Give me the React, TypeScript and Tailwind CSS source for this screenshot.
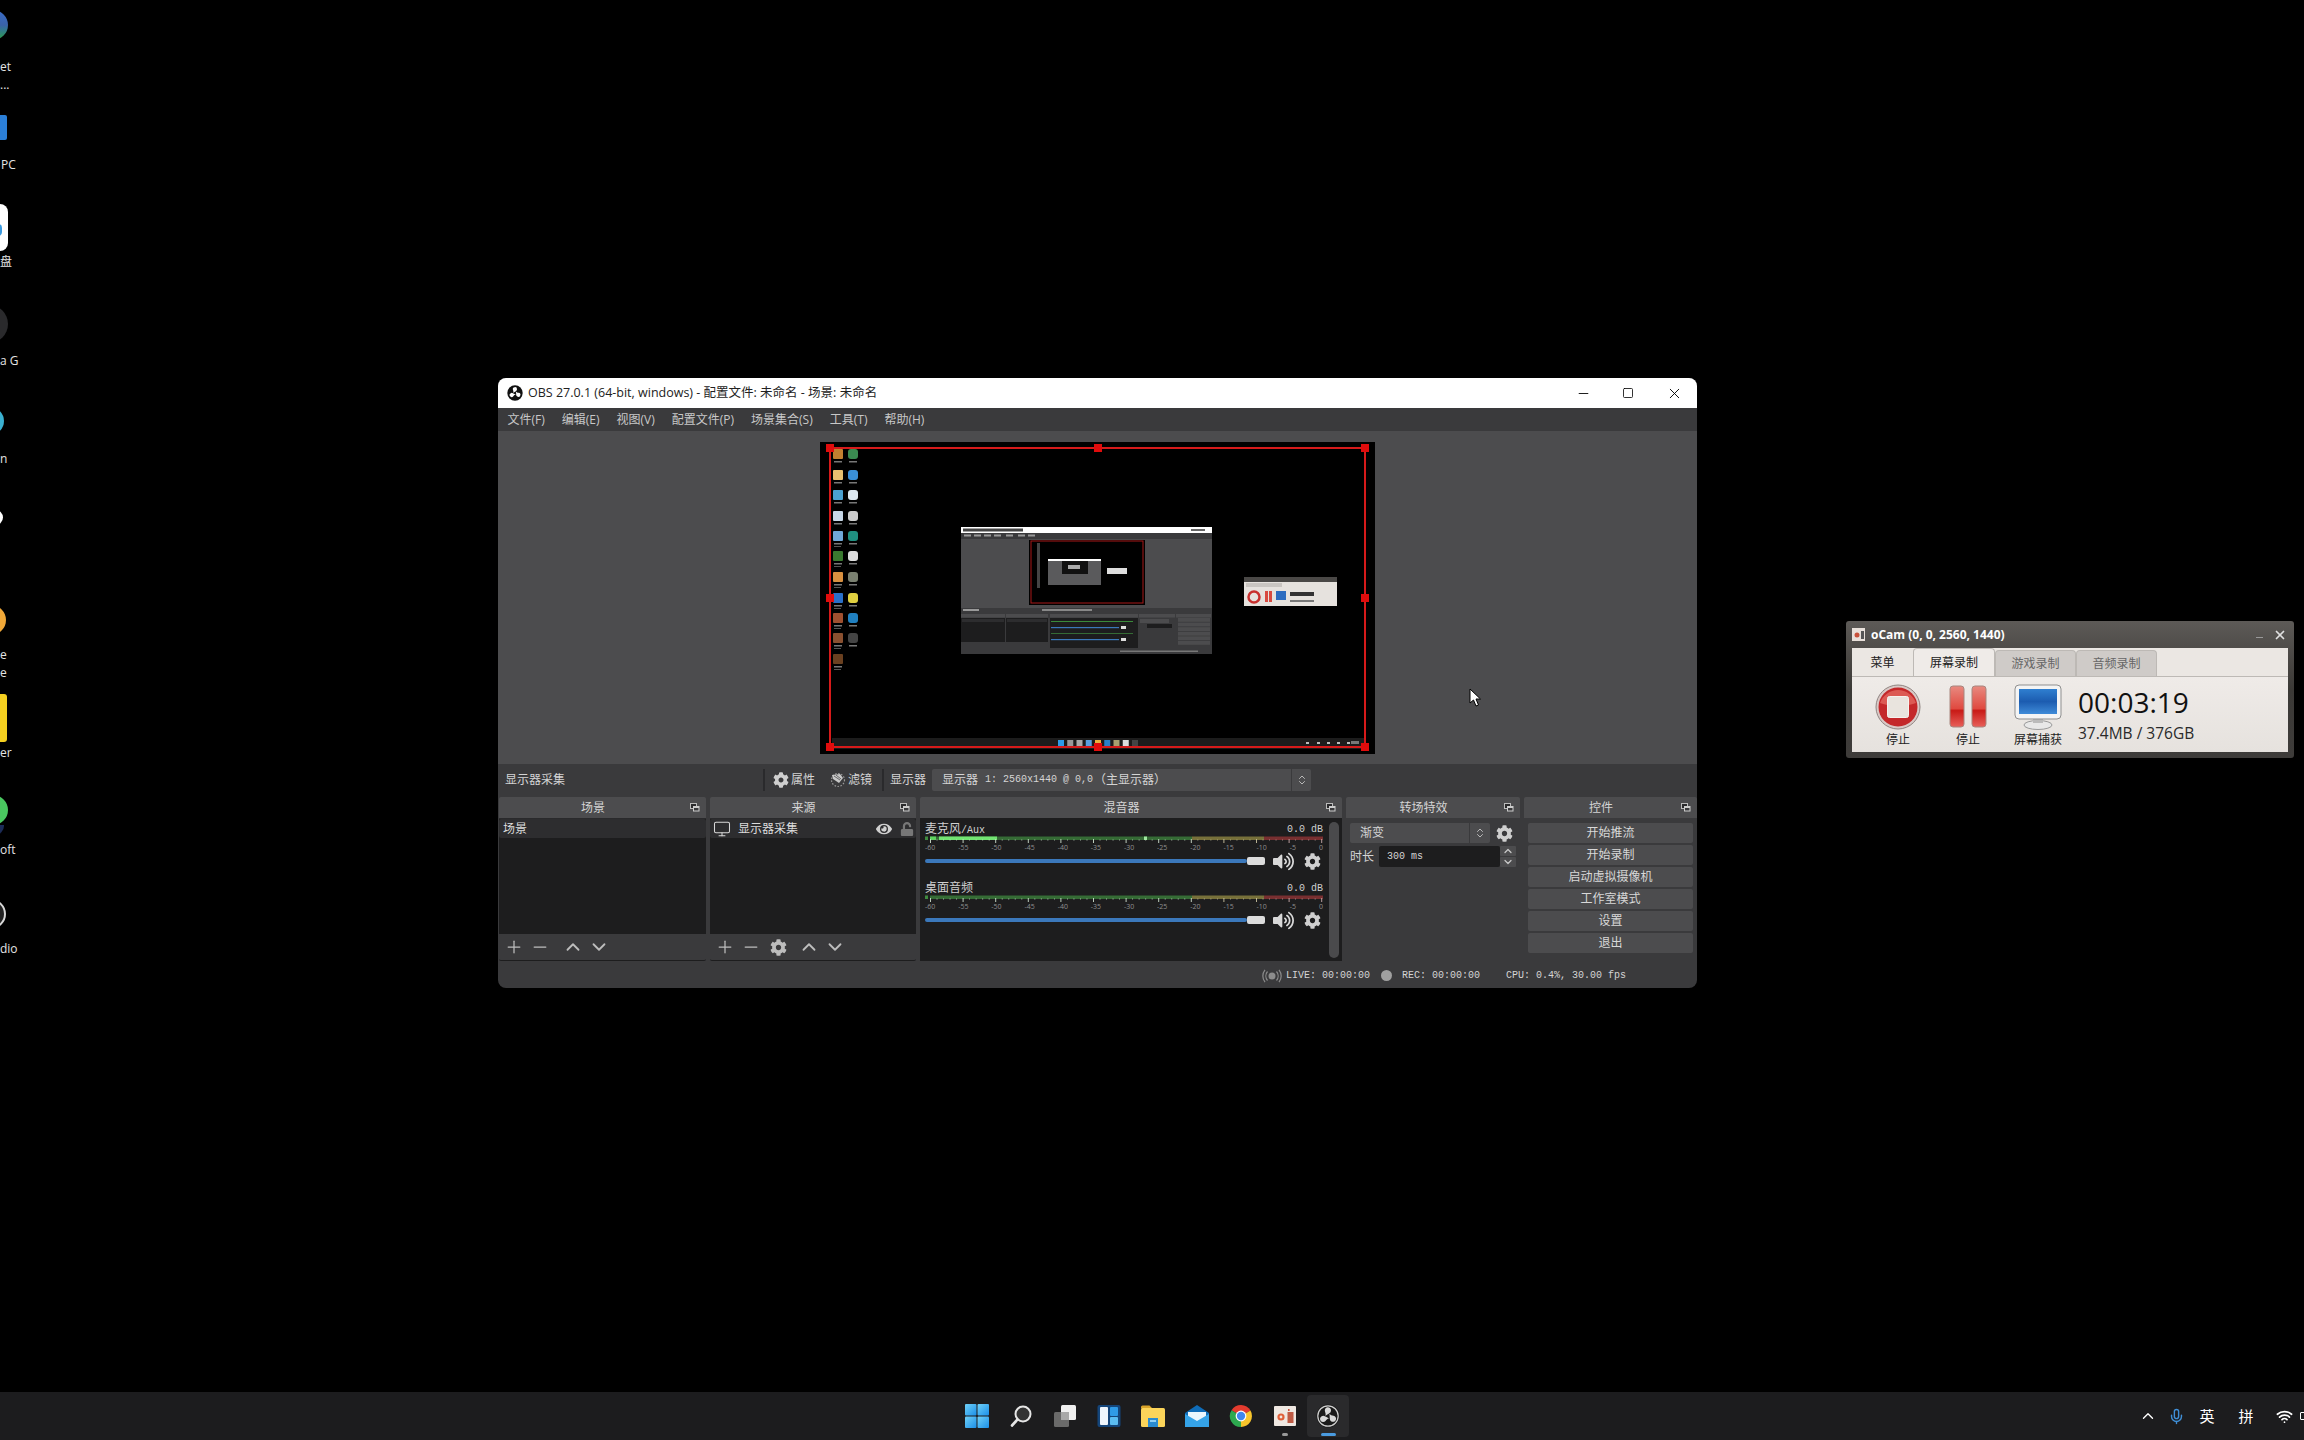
import React from "react";
import { FaCog, FaEye, FaUnlock, FaVolumeUp } from "react-icons/fa";
import { Plus, Minus, ChevronUp, ChevronDown, ChevronsUpDown, Monitor, X, Square, Mic, Wifi } from "lucide-react";

const mono = "font-['Liberation_Mono','Noto_Sans_CJK_SC',monospace]";

function ObsLogo({ size, ring = "#111", blade = "#fff" }: { size: number; ring?: string; blade?: string }) {
  const b = "M15 6.4a3.1 3.1 0 1 0-6 1c.5 1.5 1 3 .3 4.6 1.2-1.2 2.8-1.9 4-2.8A3.1 3.1 0 0 0 15 6.4z";
  return (
    <svg width={size} height={size} viewBox="0 0 24 24">
      <circle cx="12" cy="12" r="11.5" fill={ring} />
      {blade !== "#fff" && <circle cx="12" cy="12" r="10.2" fill="none" stroke="#d0d0d0" strokeWidth="1.2" />}
      <path d={b} fill={blade} />
      <path d={b} fill={blade} transform="rotate(120 12 12)" />
      <path d={b} fill={blade} transform="rotate(240 12 12)" />
    </svg>
  );
}

function DockIcon() {
  return (
    <svg width="10" height="9" viewBox="0 0 10 9">
      <rect x="0.5" y="0.5" width="6" height="5" fill="#2a2a2c" stroke="#bbb" />
      <rect x="3" y="3" width="6.5" height="5.5" fill="#ccc" />
      <rect x="4" y="5" width="4.5" height="2.5" fill="#3a3a3c" />
    </svg>
  );
}

function Dock({ title, className, children }: { title: string; className: string; children: React.ReactNode }) {
  return (
    <div className={`flex flex-col ${className}`}>
      <div className="flex h-[21px] shrink-0 items-center rounded-t-[2px] bg-[#4c4c4e] text-[12px] text-[#d4d4d4]">
        <span className="flex-1 text-center">{title}</span>
        <span className="flex w-[19px] justify-start pl-[3px]"><DockIcon /></span>
      </div>
      {children}
    </div>
  );
}

function ListDock({ title, className, row, tools }: { title: string; className: string; row: React.ReactNode; tools: React.ReactNode }) {
  return (
    <Dock title={title} className={className}>
      <div className="flex-1 border-t border-[#2a2a2c] bg-[#1d1d1e]">
        <div className="flex h-[19px] items-center rounded-[2px] bg-[#2d2d2f] text-[12px] text-[#dcdcdc]">{row}</div>
      </div>
      <div className="flex h-[27px] shrink-0 items-center rounded-b-[2px] border-b border-[#1d1d1e] bg-[#3a3a3c] text-[#bdbdbd]">{tools}</div>
    </Dock>
  );
}

function Tool({ w, children }: { w: string; children: React.ReactNode }) {
  return <span className={`flex items-center justify-center ${w}`}>{children}</span>;
}

function Meter({ active }: { active?: boolean }) {
  const ticks: React.ReactNode[] = [];
  for (let db = 0; db <= 60; db++) {
    const x = 5.5 + db * 6.52;
    const major = db % 5 === 0;
    const col = db > 51 ? "#c9a9a9" : db > 40 ? "#c9c3a0" : "#cfe0cf";
    ticks.push(<line key={db} x1={x} x2={x} y1={3} y2={major ? 7 : 5} stroke={col} strokeWidth={major ? 1 : 0.7} opacity={major ? 0.9 : 0.55} />);
  }
  return (
    <svg width="398" height="7" viewBox="0 0 398 7" className="block">
      <rect x="0" y="0.5" width="3" height="3.5" fill="#3f8a3f" />
      <rect x="5" y="0.5" width="262" height="3.5" fill="#356b35" />
      <rect x="267" y="0.5" width="72" height="3.5" fill="#77703a" />
      <rect x="339" y="0.5" width="59" height="3.5" fill="#782f30" />
      {active && (
        <>
          <rect x="5" y="0.5" width="6" height="3.5" fill="#5fd35f" />
          <rect x="14" y="0.5" width="58" height="3.5" fill="#72e472" />
          <rect x="219" y="0.5" width="3" height="3.5" fill="#9fe89f" />
        </>
      )}
      {ticks}
    </svg>
  );
}

function Channel({ name, active, children }: { name: string; active?: boolean; children?: React.ReactNode }) {
  return (
    <div className="mb-[10px] w-[398px]">
      <div className="flex h-[14px] items-center justify-between text-[#d0d0d0]">
        <span className="text-[12px] leading-none">{children ?? name}</span>
        <span className={`${mono} text-[10px]`}>0.0 dB</span>
      </div>
      <Meter active={active} />
      <div className="flex h-[8px] items-center justify-between text-[7px] leading-none text-[#8e8e8e]">
        {["-60", "-55", "-50", "-45", "-40", "-35", "-30", "-25", "-20", "-15", "-10", "-5", "0"].map((t) => (
          <span key={t}>{t}</span>
        ))}
      </div>
      <div className="flex h-[20px] items-center">
        <div className="h-[4px] w-[322px] rounded-full bg-[#3b78bb]" />
        <div className="h-[8px] w-[18px] rounded-[2px] bg-[#dcdcdc]" />
        <span className="ml-[7px] flex w-[22px] justify-center text-[#d8d8d8]"><FaVolumeUp size={21} /></span>
        <span className="ml-[9px] flex w-[18px] justify-center text-[#d0d0d0]"><FaCog size={17} /></span>
      </div>
    </div>
  );
}

function Preview() {
  const c1 = ["#c28030", "#e8c070", "#4aa0d0", "#c8d8e8", "#70a8d8", "#3a7a30", "#d89040", "#2a70c8", "#a05030", "#8a5030", "#6a4020"];
  const c2 = ["#3a8a50", "#3a90d8", "#dde8f0", "#cccccc", "#209080", "#dddddd", "#7a8070", "#e0d040", "#2080c0", "#444444"];
  const ys = [7, 28, 48, 69, 89, 109, 130, 151, 171, 191, 212];
  const task = ["#2d9be8", "#999999", "#aaaaaa", "#5a9fe0", "#e8b040", "#2a80c8", "#a8a070", "#dddddd", "#444444"];
  const tray = [486, 497, 507, 517, 527];
  const docks = [[141, 44], [186, 42], [230, 88], [319, 36], [356, 35]];
  return (
    <svg width="555" height="312" viewBox="0 0 555 312" className="block bg-black">
      <g className="blur-[0.5px]">
        {ys.map((y, i) => (
          <g key={y}>
            <rect x="13" y={y} width="10" height="10" fill={c1[i]} rx="1" />
            <rect x="14" y={y + 12} width="8" height="1.5" fill="#777" />
            {c2[i] && <rect x="28" y={y} width="10" height="10" fill={c2[i]} rx="3" />}
            {c2[i] && <rect x="29" y={y + 12} width="8" height="1.5" fill="#777" />}
            {i > 3 && <rect x="14" y={y + 15} width="7" height="1" fill="#555" />}
          </g>
        ))}
        <rect x="12" y="296" width="533" height="11" fill="#1c1c1c" />
        {task.map((c, i) => <rect key={i} x={238 + i * 9.25} y="298" width="6" height="6" fill={c} />)}
        {tray.map((x) => <rect key={x} x={x} y="300" width="3" height="2" fill="#bbb" />)}
        <rect x="531" y="299" width="8" height="3" fill="#777" />

        <rect x="141" y="85" width="251" height="127" fill="#3a3a3c" />
        <rect x="141" y="85" width="251" height="6" fill="#ffffff" />
        <rect x="143" y="86.5" width="60" height="3" fill="#444" />
        <rect x="371" y="87" width="14" height="2" fill="#666" />
        {[144, 154, 164, 174, 186, 198, 208].map((x) => <rect key={x} x={x} y="92.5" width="7" height="2" fill="#999" />)}
        <rect x="141" y="97" width="251" height="69" fill="#4c4c4e" />
        <rect x="209" y="98" width="116" height="65" fill="#000" />
        <rect x="211" y="99" width="112" height="62" fill="none" stroke="#a81818" strokeWidth="1" />
        <rect x="228" y="117" width="53" height="26" fill="#5a5a5c" />
        <rect x="228" y="117" width="53" height="2" fill="#fff" />
        <rect x="242" y="119" width="26" height="13" fill="#111" />
        <rect x="248" y="123" width="12" height="4" fill="#aaa" />
        <rect x="287" y="126" width="20" height="6" fill="#ddd" />
        <rect x="217" y="101" width="3" height="45" fill="#444" />
        <rect x="143" y="167" width="16" height="2" fill="#999" />
        <rect x="222" y="167" width="50" height="2" fill="#888" />
        {docks.map(([x, w]) => <rect key={x} x={x} y="172" width={w} height="3.5" fill="#4c4c4e" />)}
        <rect x="141" y="176" width="44" height="30" fill="#1d1d1e" />
        <rect x="186" y="176" width="42" height="30" fill="#1d1d1e" />
        <rect x="230" y="176" width="88" height="30" fill="#1d1d1e" />
        <rect x="141" y="200" width="44" height="6" fill="#3a3a3c" />
        <rect x="186" y="200" width="42" height="6" fill="#3a3a3c" />
        <rect x="142" y="177" width="42" height="3" fill="#2d2d2f" />
        <rect x="187" y="177" width="40" height="3" fill="#2d2d2f" />
        <rect x="231" y="179" width="82" height="1" fill="#3a8a3a" />
        <rect x="231" y="185" width="68" height="1.2" fill="#3b78bb" />
        <rect x="301" y="184" width="5" height="3" fill="#ddd" />
        <rect x="231" y="191" width="82" height="1" fill="#356b35" />
        <rect x="231" y="197" width="68" height="1.2" fill="#3b78bb" />
        <rect x="301" y="196" width="5" height="3" fill="#ddd" />
        {[0, 1, 2, 3, 4, 5].map((i) => <rect key={i} x="358" y={176 + i * 4.6} width="32" height="3.8" fill="#4c4c4e" />)}
        <rect x="320" y="177" width="29" height="4" fill="#4c4c4e" />
        <rect x="327" y="182" width="25" height="4" fill="#1d1d1e" />
        <rect x="300" y="208.5" width="78" height="1.5" fill="#777" />

        <rect x="424" y="135" width="93" height="29" fill="#e6e2de" />
        <rect x="424" y="135" width="93" height="5" fill="#4a4846" />
        <rect x="426" y="141" width="36" height="4" fill="#c9c5c1" />
        <circle cx="434" cy="155" r="5.5" fill="none" stroke="#c8302e" strokeWidth="2.5" />
        <rect x="445" y="149" width="3" height="11" fill="#d84a40" />
        <rect x="449" y="149" width="3" height="11" fill="#d84a40" />
        <rect x="456" y="149" width="10" height="9" fill="#2c6cc0" />
        <rect x="470" y="150" width="24" height="4" fill="#333" />
        <rect x="470" y="158" width="24" height="2" fill="#777" />
      </g>
      <rect x="10" y="6" width="535" height="299" fill="none" stroke="#d61a1a" strokeWidth="2" />
      {[[10, 6], [278, 6], [545, 6], [10, 156], [545, 156], [10, 305], [278, 305], [545, 305]].map(([x, y], i) => (
        <rect key={i} x={x - 4} y={y - 4} width="8" height="8" fill="#e00c0c" />
      ))}
    </svg>
  );
}

function ObsWindow() {
  const menus = ["文件(F)", "编辑(E)", "视图(V)", "配置文件(P)", "场景集合(S)", "工具(T)", "帮助(H)"];
  const buttons = ["开始推流", "开始录制", "启动虚拟摄像机", "工作室模式", "设置", "退出"];
  return (
    <div className="absolute left-[498px] top-[378px] flex h-[610px] w-[1199px] flex-col overflow-hidden rounded-[8px] bg-[#3a3a3c] text-[#d4d4d4]">
      <div className="flex h-[30px] shrink-0 items-center bg-white pl-[9px] text-[12.5px] text-[#222]">
        <ObsLogo size={16} />
        <span className="ml-[5px] flex-1">OBS 27.0.1 (64-bit, windows) - 配置文件: 未命名 - 场景: 未命名</span>
        <span className="flex w-[42px] justify-center text-black"><Minus size={15} strokeWidth={1.4} /></span>
        <span className="flex w-[47px] justify-center text-black"><Square size={12} strokeWidth={1.6} /></span>
        <span className="flex w-[46px] justify-center text-black"><X size={17} strokeWidth={1.3} /></span>
      </div>
      <div className="flex h-[23px] shrink-0 items-center pl-[1px] text-[12px] text-[#c8c8c8]">
        {menus.map((m) => <span key={m} className="px-[8.5px]">{m}</span>)}
      </div>
      <div className="flex h-[333px] shrink-0 items-center justify-center bg-[#4c4c4e]"><Preview /></div>
      <div className="flex h-[33px] shrink-0 items-center pb-[2px] text-[12px]">
        <span className="ml-[7px] w-[258px]">显示器采集</span>
        <span className="h-[22px] w-[2px] bg-[#2a2a2c]" />
        <span className="ml-[8px] text-[#cfcfcf]"><FaCog size={16} /></span>
        <span className="ml-[2px]">属性</span>
        <svg width="16" height="16" viewBox="0 0 16 16" className="ml-[15px]">
          <circle cx="8" cy="8" r="6.5" fill="none" stroke="#999" strokeWidth="1.2" strokeDasharray="1.5 1.5" />
          <path d="M2 3l8-1 3 4-4 5-6-4z" fill="#c8c8c8" />
          <path d="M4 4l6 4M6 3l5 4" stroke="#3a3a3c" strokeWidth="0.7" />
        </svg>
        <span className="ml-[2px]">滤镜</span>
        <span className="ml-[10px] h-[22px] w-[2px] bg-[#2a2a2c]" />
        <span className="ml-[6px]">显示器</span>
        <div className="ml-[6px] flex h-[22px] w-[379px] items-center rounded-[2px] bg-[#4c4c4e]">
          <span className="ml-[10px] flex flex-1 items-center gap-[1px]">
            <span>显示器</span>
            <span className={`${mono} ml-[6px] text-[10px]`}>1: 2560x1440 @ 0,0</span>
            <span>（主显示器）</span>
          </span>
          <span className="flex h-full w-[20px] items-center justify-center border-l border-[#3a3a3c] text-[#b8b8b8]"><ChevronsUpDown size={12} /></span>
        </div>
      </div>
      <div className="ml-[1px] flex h-[164px] shrink-0 gap-[4px]">
        <ListDock
          title="场景"
          className="w-[207px]"
          row={<span className="ml-[4px]">场景</span>}
          tools={
            <>
              <Tool w="ml-[3px] w-[24px]"><Plus size={20} strokeWidth={1.5} /></Tool>
              <Tool w="ml-[2px] w-[24px]"><Minus size={20} strokeWidth={1.5} /></Tool>
              <Tool w="ml-[8px] w-[26px]"><ChevronUp size={22} strokeWidth={2} /></Tool>
              <Tool w="w-[26px]"><ChevronDown size={22} strokeWidth={2} /></Tool>
            </>
          }
        />
        <ListDock
          title="来源"
          className="w-[206px]"
          row={
            <>
              <span className="ml-[3px] text-[#d8d8d8]"><Monitor size={18} strokeWidth={1.4} /></span>
              <span className="ml-[7px] flex-1">显示器采集</span>
              <span className="text-[#d0d0d0]"><FaEye size={16} /></span>
              <span className="ml-[8px] mr-[2px] text-[#777]"><FaUnlock size={14} /></span>
            </>
          }
          tools={
            <>
              <Tool w="ml-[3px] w-[24px]"><Plus size={20} strokeWidth={1.5} /></Tool>
              <Tool w="ml-[2px] w-[24px]"><Minus size={20} strokeWidth={1.5} /></Tool>
              <Tool w="ml-[2px] w-[26px]"><FaCog size={17} /></Tool>
              <Tool w="ml-[5px] w-[26px]"><ChevronUp size={22} strokeWidth={2} /></Tool>
              <Tool w="w-[26px]"><ChevronDown size={22} strokeWidth={2} /></Tool>
            </>
          }
        />
        <Dock title="混音器" className="w-[422px]">
          <div className="flex flex-1 bg-[#1d1d1e] pl-[5px] pt-[4px]">
            <div>
              <Channel name="麦克风/Aux" active>
                麦克风<span className={`${mono} text-[10px]`}>/Aux</span>
              </Channel>
              <Channel name="桌面音频" />
            </div>
            <div className="ml-[6px] h-[136px] w-[10px] rounded-full bg-[#4a4a4c]" />
          </div>
        </Dock>
        <Dock title="转场特效" className="w-[174px]">
          <div className="flex flex-1 flex-col pl-[4px] pt-[5px] text-[12px]">
            <div className="flex items-center">
              <div className="flex h-[20px] w-[140px] items-center rounded-[2px] bg-[#4c4c4e]">
                <span className="ml-[10px] flex-1">渐变</span>
                <span className="flex h-full w-[21px] items-center justify-center border-l border-[#3a3a3c] text-[#b8b8b8]"><ChevronsUpDown size={12} /></span>
              </div>
              <span className="ml-[6px] text-[#cfcfcf]"><FaCog size={17} /></span>
            </div>
            <div className="mt-[3px] flex items-center">
              <span className="w-[29px]">时长</span>
              <div className={`${mono} flex h-[21px] w-[121px] items-center rounded-[2px] bg-[#1d1d1e] pl-[8px] text-[10px]`}>300 ms</div>
              <div className="flex w-[16px] flex-col items-center gap-[1px] text-[#c8c8c8]">
                <span className="flex h-[10px] w-full items-center justify-center rounded-[1px] bg-[#4c4c4e]"><ChevronUp size={12} strokeWidth={2.5} /></span>
                <span className="flex h-[10px] w-full items-center justify-center rounded-[1px] bg-[#4c4c4e]"><ChevronDown size={12} strokeWidth={2.5} /></span>
              </div>
            </div>
          </div>
        </Dock>
        <Dock title="控件" className="w-[173px]">
          <div className="flex flex-1 flex-col gap-[2px] px-[4px] pt-[5px]">
            {buttons.map((b) => (
              <div key={b} className="flex h-[20px] items-center justify-center rounded-[2px] bg-[#4c4c4e] text-[12px] text-[#d8d8d8]">{b}</div>
            ))}
          </div>
        </Dock>
      </div>
      <div className={`${mono} flex h-[27px] shrink-0 items-center pl-[764px] pt-[2px] text-[10px] text-[#d4d4d4]`}>
        <svg width="20" height="14" viewBox="0 0 20 14" className="text-[#8c8c8c]">
          <circle cx="10" cy="7" r="3.5" fill="currentColor" />
          <path d="M5.5 2.5a7 7 0 0 0 0 9M14.5 2.5a7 7 0 0 1 0 9M3 0.8a10 10 0 0 0 0 12.4M17 0.8a10 10 0 0 1 0 12.4" fill="none" stroke="currentColor" strokeWidth="1.2" />
        </svg>
        <span className="ml-[4px]">LIVE: 00:00:00</span>
        <span className="ml-[11px] h-[11px] w-[11px] rounded-full bg-[#a0a0a0]" />
        <span className="ml-[10px]">REC: 00:00:00</span>
        <span className="ml-[26px]">CPU: 0.4%, 30.00 fps</span>
      </div>
    </div>
  );
}

function OcamTab({ label, active, plain }: { label: string; active?: boolean; plain?: boolean }) {
  const tone = active
    ? "h-[28px] w-[82px] bg-[#efebe8] text-[#222] border-[#bdb9b5]"
    : plain
      ? "h-[27px] w-[61px] text-[#222] border-transparent"
      : "h-[26px] w-[81px] bg-[#cfcbc8] text-[#666] border-[#bdb9b5]";
  return <div className={`flex items-center justify-center rounded-t-[4px] border-x border-t text-[12px] ${tone}`}>{label}</div>;
}

function OcamWindow() {
  return (
    <div className="absolute left-[1846px] top-[621px] flex h-[137px] w-[448px] flex-col rounded-[3px] bg-gradient-to-b from-[#5d5a57] via-[#3b3936] to-[#3e3c3a] px-[6px]">
      <div className="flex h-[27px] shrink-0 items-center text-[12px] font-bold text-white">
        <svg width="13" height="13" viewBox="0 0 13 13">
          <rect width="13" height="13" fill="#e8e0da" />
          <circle cx="5" cy="7" r="2.5" fill="#c8503a" />
          <rect x="9" y="3" width="3" height="8" fill="#555" />
        </svg>
        <span className="ml-[6px] flex-1">oCam (0, 0, 2560, 1440)</span>
        <span className="mb-[-6px] mr-[10px] h-[1px] w-[7px] bg-[#999]" />
        <span className="mr-[1px] text-[#e0e0e0]"><X size={14} strokeWidth={3} /></span>
      </div>
      <div className="flex h-[104px] flex-col bg-[#ebe7e3]">
        <div className="flex h-[28px] shrink-0 items-end">
          <OcamTab label="菜单" plain />
          <OcamTab label="屏幕录制" active />
          <OcamTab label="游戏录制" />
          <OcamTab label="音频录制" />
        </div>
        <div className="flex flex-1 border-t border-[#bdb9b5] bg-gradient-to-b from-[#efebe8] to-[#e6e2de] pl-[11px] pt-[7px] text-[12px] text-[#222]">
          <div className="flex w-[70px] flex-col items-center">
            <svg width="46" height="46" viewBox="0 0 46 46">
              <circle cx="23" cy="23" r="22" fill="#d9c9c6" stroke="#8f8582" strokeWidth="1" />
              <circle cx="23" cy="23" r="19.5" fill="#c4282a" />
              <path d="M5 19a19 19 0 0 1 36 0c-10 4-26 4-36 0z" fill="#dc5a54" />
              <rect x="12.5" y="12.5" width="21" height="21" rx="2" fill="#e9e4de" stroke="#f6f2ee" />
            </svg>
            <span className="mt-[1px]">停止</span>
          </div>
          <div className="flex w-[70px] flex-col items-center">
            <svg width="38" height="46" viewBox="0 0 38 46">
              <defs>
                <linearGradient id="pb" x1="0" y1="0" x2="0" y2="1">
                  <stop offset="0" stopColor="#e88a80" />
                  <stop offset="0.55" stopColor="#e04a40" />
                  <stop offset="0.6" stopColor="#c81a16" />
                  <stop offset="1" stopColor="#e8605a" />
                </linearGradient>
              </defs>
              <rect x="1" y="2" width="14" height="41" rx="3" fill="url(#pb)" stroke="#a8867f" />
              <rect x="23" y="2" width="14" height="41" rx="3" fill="url(#pb)" stroke="#a8867f" />
            </svg>
            <span className="mt-[1px]">停止</span>
          </div>
          <div className="flex w-[70px] flex-col items-center">
            <svg width="48" height="46" viewBox="0 0 48 46">
              <defs>
                <linearGradient id="sc" x1="0" y1="0" x2="0" y2="1">
                  <stop offset="0" stopColor="#2f7fd0" />
                  <stop offset="0.5" stopColor="#1c5cb0" />
                  <stop offset="1" stopColor="#3f8bd8" />
                </linearGradient>
              </defs>
              <ellipse cx="24" cy="41" rx="14" ry="4.5" fill="#e8e8e8" stroke="#9a9a9a" />
              <rect x="19" y="33" width="10" height="6" fill="#bbbbbb" />
              <rect x="1" y="1" width="46" height="34" rx="4" fill="#f4f4f4" stroke="#8f8f8f" />
              <rect x="5" y="5" width="38" height="25" fill="url(#sc)" />
            </svg>
            <span className="mt-[1px]">屏幕捕获</span>
          </div>
          <div className="ml-[5px] flex flex-col text-[#111]">
            <span className="mt-[-1px] text-[28px] leading-[38px]">00:03:19</span>
            <span className="mt-[1px] text-[15.5px] leading-[22px] text-[#2a2a2a]">37.4MB / 376GB</span>
          </div>
        </div>
      </div>
    </div>
  );
}

function TaskIcon({ children }: { children: React.ReactNode }) {
  return <div className="flex h-[48px] w-[44px] items-center justify-center">{children}</div>;
}

function Taskbar() {
  return (
    <div className="flex h-[48px] shrink-0 items-center overflow-hidden bg-[#1c1c1e]">
      <div className="flex-1" />
      <div className="flex items-center">
        <TaskIcon>
          <svg width="24" height="24" viewBox="0 0 24 24">
            <defs>
              <linearGradient id="w" x1="0" y1="0" x2="1" y2="1">
                <stop offset="0" stopColor="#6fd0f7" />
                <stop offset="1" stopColor="#1b8fe8" />
              </linearGradient>
            </defs>
            <rect x="0" y="0" width="11.5" height="11.5" rx="1" fill="url(#w)" />
            <rect x="12.5" y="0" width="11.5" height="11.5" rx="1" fill="url(#w)" />
            <rect x="0" y="12.5" width="11.5" height="11.5" rx="1" fill="url(#w)" />
            <rect x="12.5" y="12.5" width="11.5" height="11.5" rx="1" fill="url(#w)" />
          </svg>
        </TaskIcon>
        <TaskIcon>
          <svg width="24" height="24" viewBox="0 0 24 24" fill="none">
            <circle cx="14" cy="10" r="7.5" stroke="#e6e6e6" strokeWidth="2" fill="#333" />
            <path d="M8.5 15.5l-5.5 6" stroke="#e6e6e6" strokeWidth="2.6" strokeLinecap="round" />
          </svg>
        </TaskIcon>
        <TaskIcon>
          <svg width="24" height="24" viewBox="0 0 24 24">
            <rect x="1" y="8" width="15" height="15" rx="1.5" fill="#6a6a6a" />
            <rect x="8" y="1" width="15" height="15" rx="1.5" fill="#f0f0f0" />
            <rect x="8" y="8" width="8" height="8" fill="#a8a8a8" />
          </svg>
        </TaskIcon>
        <TaskIcon>
          <svg width="24" height="24" viewBox="0 0 24 24">
            <rect x="0.5" y="1" width="23" height="22" rx="2" fill="#14457a" />
            <rect x="3" y="3" width="8" height="18" rx="1" fill="#eef5fc" />
            <rect x="13" y="3" width="8" height="9" rx="1" fill="#2f9be8" />
            <rect x="13" y="13" width="8" height="8" rx="1" fill="#5bbdf2" />
          </svg>
        </TaskIcon>
        <TaskIcon>
          <svg width="26" height="24" viewBox="0 0 26 24">
            <path d="M1 3a1.5 1.5 0 0 1 1.5-1.5h7l3 3H1z" fill="#d9a42a" />
            <rect x="1" y="4" width="24" height="19" rx="1.5" fill="#fbd45a" />
            <rect x="8" y="14" width="10" height="9" fill="#2a8bd0" />
            <rect x="10" y="16" width="6" height="2" fill="#8fd0f5" />
          </svg>
        </TaskIcon>
        <TaskIcon>
          <svg width="26" height="24" viewBox="0 0 26 24">
            <path d="M1 9L13 1l12 8v14H1z" fill="#0f6cb8" />
            <path d="M4 8h18v8l-9 4-9-4z" fill="#eaf6fd" />
            <path d="M1 10l12 7 12-7v13H1z" fill="#35a3e8" />
          </svg>
        </TaskIcon>
        <TaskIcon>
          <svg width="24" height="24" viewBox="0 0 24 24">
            <path d="M12 12L2.5 6.2A11 11 0 0 1 21.5 6.5z" fill="#e33b2e" />
            <path d="M12 12L21.5 6.5A11 11 0 0 1 12 23z" fill="#f8c52c" />
            <path d="M12 12L12 23A11 11 0 0 1 2.5 6.2z" fill="#2da94f" />
            <circle cx="12" cy="12" r="5.4" fill="#fff" />
            <circle cx="12" cy="12" r="4.2" fill="#3f87ee" />
          </svg>
        </TaskIcon>
        <div className="relative flex h-[48px] w-[44px] items-center justify-center">
          <svg width="22" height="22" viewBox="0 0 22 22">
            <rect x="0" y="1" width="22" height="20" rx="1" fill="#efe8e2" />
            <circle cx="7" cy="12" r="3.6" fill="#e0603a" />
            <circle cx="7" cy="12" r="1.4" fill="#efe8e2" />
            <rect x="14" y="4" width="1.6" height="2" fill="#c8503a" />
            <rect x="13.5" y="7" width="6" height="11" fill="#bf5b45" />
          </svg>
          <span className="absolute bottom-[4px] h-[3px] w-[6px] rounded-full bg-[#999]" />
        </div>
        <div className="relative flex h-[42px] w-[42px] items-center justify-center rounded-[4px] bg-[#2a2a2c]">
          <ObsLogo size={24} ring="#1a1a1a" blade="#d8d8d8" />
          <span className="absolute bottom-[1px] h-[3px] w-[15px] rounded-full bg-[#4a9be0]" />
        </div>
      </div>
      <div className="flex flex-1 justify-end">
        <div className="mr-[-4px] flex items-center text-[15px] text-white">
          <span className="flex w-[28px] justify-center"><ChevronUp size={18} strokeWidth={1.8} /></span>
          <span className="flex w-[28px] justify-center text-[#3f8fd8]"><Mic size={17} /></span>
          <span className="flex w-[34px] justify-center">英</span>
          <span className="flex w-[44px] justify-center">拼</span>
          <span className="flex w-[32px] justify-center"><Wifi size={17} strokeWidth={2.4} /></span>
          <span className="h-[8px] w-[8px] rounded-[1px] border border-white" />
        </div>
      </div>
    </div>
  );
}

function DesktopIcons() {
  const label = "absolute left-0 text-[12px] leading-none text-[#e4e4e4]";
  return (
    <>
      <div className="absolute left-[-22px] top-[10px] h-[30px] w-[30px] rounded-full bg-gradient-to-b from-[#3a6cc8] via-[#3a62a8] to-[#2f9a3a]" />
      <span className={`${label} top-[61px]`}>et</span>
      <span className={`${label} top-[79px]`}>...</span>
      <div className="absolute left-[-20px] top-[115px] h-[25px] w-[27px] rounded-[2px] bg-[#2b7fd8]" />
      <span className={`${label} left-[1px] top-[159px]`}>PC</span>
      <div className="absolute left-[-30px] top-[204px] h-[47px] w-[38px] rounded-[8px] bg-white" />
      <div className="absolute left-[-6px] top-[224px] h-[12px] w-[8px] rounded-full bg-[#3a9ae0]" />
      <span className={`${label} top-[256px]`}>盘</span>
      <div className="absolute left-[-32px] top-[305px] h-[38px] w-[40px] rounded-full bg-[#2a2a2c]" />
      <span className={`${label} top-[355px]`}>a G</span>
      <div className="absolute left-[-26px] top-[407px] h-[28px] w-[30px] rounded-full bg-[#3ab0d0]" />
      <span className={`${label} top-[453px]`}>n</span>
      <div className="absolute left-[-12px] top-[510px] h-[15px] w-[15px] rounded-full bg-white" />
      <div className="absolute left-[-24px] top-[605px] h-[30px] w-[30px] rounded-full bg-[#f0a838]" />
      <span className={`${label} top-[649px]`}>e</span>
      <span className={`${label} top-[667px]`}>e</span>
      <div className="absolute left-[-20px] top-[694px] h-[48px] w-[27px] rounded-[3px] bg-[#f5d020]" />
      <span className={`${label} top-[747px]`}>er</span>
      <div className="absolute left-[-22px] top-[795px] h-[30px] w-[30px] rounded-full bg-[#4ac860]" />
      <div className="absolute left-[-14px] top-[825px] h-[10px] w-[18px] rounded-b-full bg-[#1c2c58]" />
      <span className={`${label} top-[844px]`}>oft</span>
      <div className="absolute left-[-24px] top-[899px] h-[30px] w-[30px] rounded-full border-2 border-[#d8d8d8] bg-[#222]" />
      <span className={`${label} top-[943px]`}>dio</span>
    </>
  );
}

export default function App() {
  return (
    <div className="flex h-[1440px] w-[2304px] flex-col overflow-hidden bg-black font-['Open_Sans','Noto_Sans_CJK_SC',sans-serif]">
      <div className="relative flex-1 overflow-hidden">
        <DesktopIcons />
        <ObsWindow />
        <OcamWindow />
        <svg width="12" height="19" viewBox="0 0 12 19" className="absolute left-[1469px] top-[688px]">
          <path d="M1 1v14l3.5-3 2.5 6 2.5-1-2.5-6h4.5z" fill="#fff" stroke="#000" strokeWidth="1" />
        </svg>
      </div>
      <Taskbar />
    </div>
  );
}
